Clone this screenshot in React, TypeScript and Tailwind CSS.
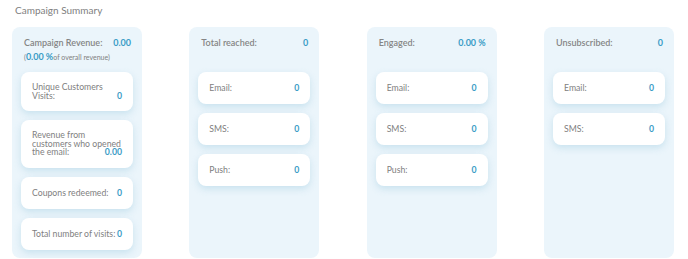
import React from "react";

const font = { fontFamily: "Lato, 'Open Sans', sans-serif" };

function Card({ lines, value, h = "h-[32px]" }: { lines: string[]; value: string; h?: string }) {
  const last = lines[lines.length - 1];
  const rest = lines.slice(0, -1);
  return (
    <div className={`flex items-center rounded-[8px] bg-white pl-[11px] pr-[11px] shadow-[0_3px_7px_rgba(160,205,225,0.45)] ${h}`}>
      <div className="flex w-full flex-col text-[8.7px] leading-[8.5px] text-[#808080]">
        {rest.map((l) => (
          <div key={l} className="whitespace-nowrap">{l}</div>
        ))}
        <div className="flex items-end justify-between whitespace-nowrap">
          <span>{last}</span>
          <span className="font-bold text-[#3a9cc6]">{value}</span>
        </div>
      </div>
    </div>
  );
}

function Panel({ title, value, sub, children }: { title: string; value: string; sub?: React.ReactNode; children: React.ReactNode }) {
  return (
    <div className="flex h-[231px] w-[130px] flex-col rounded-[8px] bg-[#ebf5fb]">
      <div className="h-[45px] pl-[12px] pr-[11px] pt-[10px]">
        <div className="flex items-center justify-between text-[9px] leading-[11px]">
          <span className="font-semibold text-[#858585]">{title}</span>
          <span className="font-bold text-[#3a9cc6]">{value}</span>
        </div>
        {sub}
      </div>
      <div className="flex flex-col gap-[9px] px-[9px]">{children}</div>
    </div>
  );
}

export default function App() {
  return (
    <div className="h-[259px] w-[688px] bg-white" style={font}>
      <div className="h-[27px] pl-[15px] pt-[4px] text-[10px] leading-[12px] text-[#808080]">Campaign Summary</div>
      <div className="flex justify-between pl-[12px] pr-[14px]">
        <Panel
          title="Campaign Revenue:"
          value="0.00"
          sub={
            <div className="mt-[4px] text-[7px] leading-[10px] text-[#808080]">
              (<span className="text-[9px] font-bold text-[#3a9cc6]">0.00 %</span>of overall revenue)
            </div>
          }
        >
          <Card h="h-[39px]" lines={["Unique Customers", "Visits:"]} value="0" />
          <Card h="h-[48px]" lines={["Revenue from", "customers who opened", "the email:"]} value="0.00" />
          <Card lines={["Coupons redeemed:"]} value="0" />
          <Card lines={["Total number of visits:"]} value="0" />
        </Panel>
        <Panel title="Total reached:" value="0">
          <Card lines={["Email:"]} value="0" />
          <Card lines={["SMS:"]} value="0" />
          <Card lines={["Push:"]} value="0" />
        </Panel>
        <Panel title="Engaged:" value="0.00 %">
          <Card lines={["Email:"]} value="0" />
          <Card lines={["SMS:"]} value="0" />
          <Card lines={["Push:"]} value="0" />
        </Panel>
        <Panel title="Unsubscribed:" value="0">
          <Card lines={["Email:"]} value="0" />
          <Card lines={["SMS:"]} value="0" />
        </Panel>
      </div>
    </div>
  );
}
